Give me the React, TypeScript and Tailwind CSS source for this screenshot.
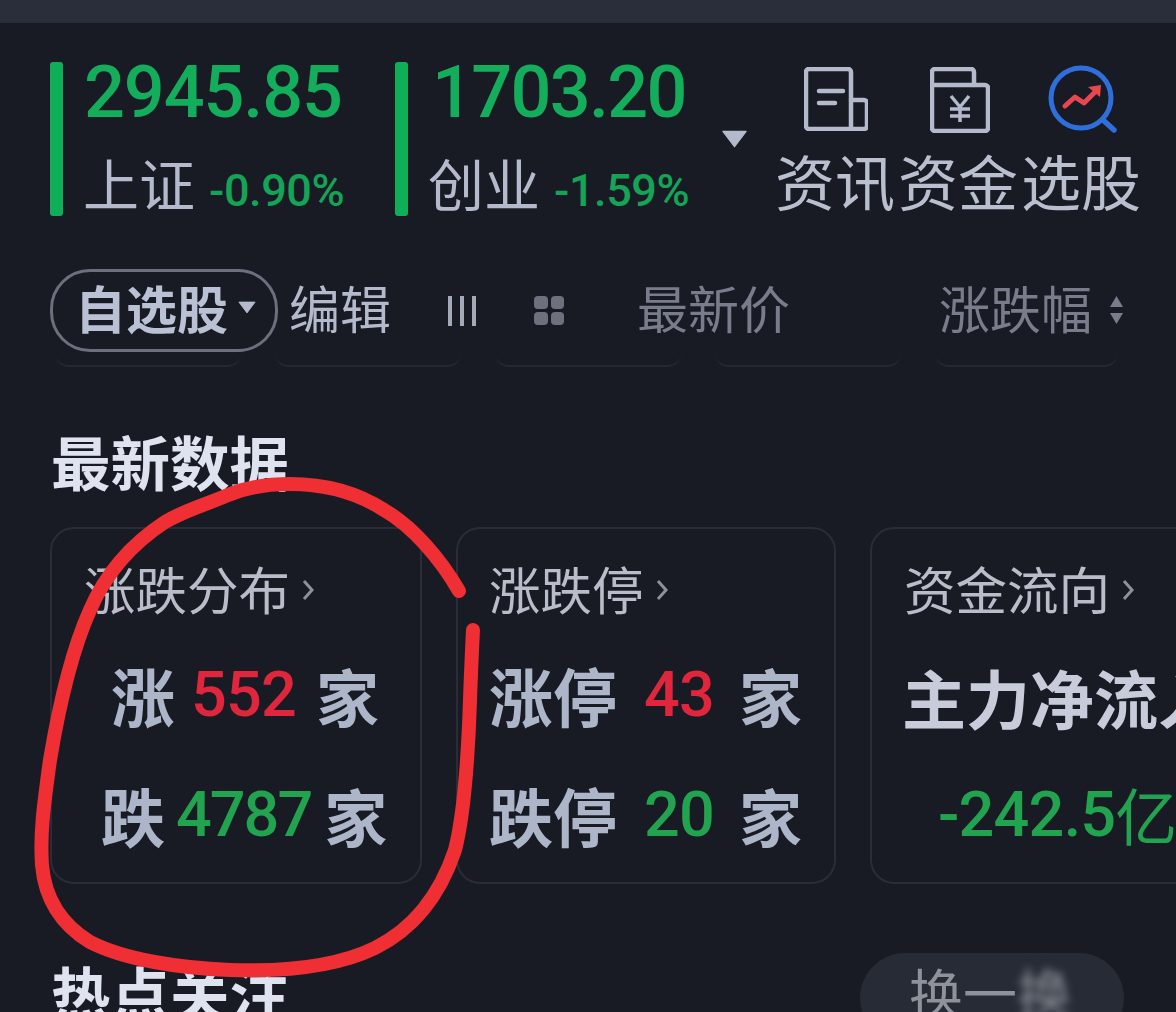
const cjk = { fontFamily: '"Noto Sans CJK SC", "Noto Sans", sans-serif' };

function Quote({ value, name, pct, width, numGap }: { value: string; name: string; pct: string; width: string; numGap: string }) {
  return (
    <div className={`flex ${width}`}>
      <div className="w-[13px] h-[154px] rounded-[3px] bg-[#0fae58]" />
      <div className="flex flex-col">
        <div className={`h-[62px] flex items-center text-[72px] leading-none font-medium text-[#14ad5c] font-['Roboto',sans-serif] ${numGap}`}>{value}</div>
        <div className="flex items-center h-[92px] pt-[24px] ml-[20px]">
          <span style={cjk} className="text-[56px] leading-none text-[#b4bacb]">{name}</span>
          <span className="ml-[14px] mt-[16px] text-[45px] leading-none font-medium text-[#14a357] font-['Roboto',sans-serif] tracking-[-0.4px]">{pct}</span>
        </div>
      </div>
    </div>
  );
}

function DocIcon() {
  return (
    <svg width="64" height="64" viewBox="0 0 64 64" fill="none" stroke="#b4bacb" strokeWidth="4.5" strokeLinejoin="round" strokeLinecap="round">
      <path d="M47 62H5a3 3 0 0 1-3-3V5a3 3 0 0 1 3-3h39a3 3 0 0 1 3 3v57" />
      <path d="M47 33h13a3 3 0 0 1 3 3v23a3 3 0 0 1-3 3H47" />
      <path d="M15 24h24M15 36h16" />
    </svg>
  );
}

function FundIcon() {
  return (
    <svg width="60" height="66" viewBox="0 0 60 66" fill="none" stroke="#b4bacb" strokeWidth="4.5" strokeLinejoin="round" strokeLinecap="round">
      <path d="M2 18V5a3 3 0 0 1 3-3h36a3 3 0 0 1 3 3v13" />
      <path d="M5 18h50a3 3 0 0 1 3 3v40a3 3 0 0 1-3 3H5a3 3 0 0 1-3-3V18" />
      <path d="M21 29l9 11 9-11M20 42h20M20 49h20M30 40v15" strokeWidth="3.5" strokeLinecap="butt" />
    </svg>
  );
}

function PickIcon() {
  return (
    <svg width="70" height="68" viewBox="0 0 70 68" fill="none" strokeLinecap="round" strokeLinejoin="round">
      <circle cx="33" cy="33" r="30" stroke="#2f6fdc" strokeWidth="5" />
      <path d="M55 55l11 10" stroke="#2f6fdc" strokeWidth="5.5" />
      <path d="M17 41l10-9 9 6 13-13" stroke="#e8474f" strokeWidth="5" />
      <path d="M40 22l13-2-1 12z" fill="#e8474f" />
    </svg>
  );
}

function Caret({ cls }: { cls: string }) {
  return (
    <svg className={cls} viewBox="0 0 20 14">
      <path d="M1 1h18L10 13z" fill="currentColor" stroke="currentColor" strokeWidth="1" strokeLinejoin="round" />
    </svg>
  );
}

function Chevron() {
  return (
    <svg className="ml-[12px] mt-[4px]" width="12" height="24" viewBox="0 0 12 24" fill="none" stroke="#8d919b" strokeWidth="3">
      <path d="M2 3l8 9-8 9" />
    </svg>
  );
}

function CardTitle({ text }: { text: string }) {
  return (
    <div className="flex items-center h-[50px]">
      <span className="text-[51.5px] leading-none text-[#b9bdc9] font-normal">{text}</span>
      <Chevron />
    </div>
  );
}

function StatRow({ a, n, numCls, tailCls, cls }: { a: string; n: string; numCls: string; tailCls: string; cls: string }) {
  return (
    <div className={`flex items-center h-[60px] ${cls}`}>
      <span className="text-[64px] leading-none font-bold text-[#adb6c8]">{a}</span>
      <span className={`font-['Roboto',sans-serif] font-medium text-[63px] leading-none ${numCls}`}>{n}</span>
      <span className={`text-[63px] leading-none font-bold text-[#adb6c8] ${tailCls}`}>家</span>
    </div>
  );
}

export default function App() {
  return (
    <div style={cjk} className="relative w-[1176px] h-[1012px] overflow-hidden bg-[#181b24]">
      <div className="h-[23px] bg-[#2a2d3a]" />

      <div className="flex mt-[39px] pl-[50px] h-[154px]">
        <Quote value="2945.85" name="上证" pct="-0.90%" width="w-[345px]" numGap="ml-[21px] tracking-[-1.1px]" />
        <Quote value="1703.20" name="创业" pct="-1.59%" width="w-[326px]" numGap="ml-[24px] tracking-[-1.7px]" />
        <Caret cls="w-[27px] h-[18px] mt-[68px] text-[#b4bacb]" />
        <div className="flex flex-col ml-[27px] w-[366px]">
          <div className="flex h-[70px] pt-[5px] pl-[29px] items-start">
            <DocIcon />
            <div className="ml-[62px]"><FundIcon /></div>
            <div className="ml-[58px] -mt-[2px]"><PickIcon /></div>
          </div>
          <div className="flex mt-[18px] gap-[3px] text-[60px] leading-none text-[#b9bfce] whitespace-nowrap">
            <span>资讯</span>
            <span>资金</span>
            <span>选股</span>
          </div>
        </div>
      </div>

      <div className="flex items-center mt-[53px] ml-[50px] h-[83px]">
        <div className="flex items-center w-[228px] h-[83px] rounded-[40px] border-[3px] border-[#6c707e] pl-[22px]">
          <span className="-mt-[6px] text-[51px] leading-none font-bold text-[#bac1d4]">自选股</span>
          <Caret cls="w-[18px] h-[13px] ml-[10px] -mt-[6px] text-[#b4bacb]" />
        </div>
        <span className="ml-[11px] -mt-[6px] text-[51px] leading-none text-[#b4bacb]">编辑</span>
        <div className="flex gap-[8px] ml-[57px] h-[30px]">
          <div className="w-[4px] h-full bg-[#a4a9b7]" />
          <div className="w-[4px] h-full bg-[#a4a9b7]" />
          <div className="w-[4px] h-full bg-[#a4a9b7]" />
        </div>
        <div className="grid grid-cols-2 gap-[3px] ml-[58px] w-[30px]">
          <div className="h-[13px] rounded-[4px] bg-[#6d717d]" />
          <div className="h-[13px] rounded-[4px] bg-[#6d717d]" />
          <div className="h-[13px] rounded-[4px] bg-[#6d717d]" />
          <div className="h-[13px] rounded-[4px] bg-[#6d717d]" />
        </div>
        <span className="ml-[73px] -mt-[6px] text-[51px] leading-none text-[#797d8b]">最新价</span>
        <span className="ml-[149px] -mt-[6px] text-[51px] leading-none text-[#797d8b]">涨跌幅</span>
        <svg className="ml-[17px] -mt-[2px]" width="15" height="30" viewBox="0 0 15 30">
          <path d="M7.5 1L14 12H1z" fill="#797d8b" />
          <path d="M1 18h13L7.5 29z" fill="#797d8b" />
        </svg>
      </div>

      <div className="flex gap-[34px] ml-[55px] h-[15px]">
        <div className="w-[186px] h-full rounded-b-[14px] border-b-2 border-[#242832]" />
        <div className="w-[186px] h-full rounded-b-[14px] border-b-2 border-[#242832]" />
        <div className="w-[186px] h-full rounded-b-[14px] border-b-2 border-[#242832]" />
        <div className="w-[186px] h-full rounded-b-[14px] border-b-2 border-[#242832]" />
        <div className="w-[183px] h-full rounded-b-[14px] border-b-2 border-[#242832]" />
      </div>

      <div className="mt-[64px] ml-[51px] h-[60px] text-[59.5px] leading-none font-bold text-[#dfe3f0]">最新数据</div>

      <div className="flex gap-[34px] mt-[36px] ml-[50px] w-[1300px]">
        <div className="w-[372px] h-[357px] shrink-0 rounded-[24px] border-2 border-[#2a2d38] pt-[34px] pl-[32px]">
          <CardTitle text="涨跌分布" />
          <StatRow a="涨" n="552" numCls="text-[#e0263c] tracking-[-0.8px]" tailCls="ml-[4px]" cls="mt-[51px] ml-[27px] gap-[16px]" />
          <StatRow a="跌" n="4787" numCls="text-[#22a34f] tracking-[-2px]" tailCls="ml-[2px]" cls="mt-[60px] ml-[17px] gap-[11px]" />
        </div>
        <div className="w-[380px] h-[357px] shrink-0 rounded-[24px] border-2 border-[#2a2d38] pt-[34px] pl-[31px]">
          <CardTitle text="涨跌停" />
          <StatRow a="涨停" n="43" numCls="text-[#e0263c] tracking-[-0.8px]" tailCls="-ml-[2px]" cls="mt-[51px] gap-[27px]" />
          <StatRow a="跌停" n="20" numCls="text-[#22a34f] tracking-[-0.8px]" tailCls="-ml-[2px]" cls="mt-[60px] gap-[27px]" />
        </div>
        <div className="w-[420px] h-[357px] shrink-0 rounded-[24px] border-2 border-[#2a2d38] pt-[34px] pl-[32px]">
          <CardTitle text="资金流向" />
          <div className="mt-[51px] -ml-[2px] h-[60px] text-[64px] leading-none font-bold text-[#c8cbda] whitespace-nowrap">主力净流入</div>
          <div className="mt-[60px] ml-[34px] h-[60px] flex items-center text-[#22a34f] whitespace-nowrap">
            <span className="font-['Roboto',sans-serif] font-medium text-[63px] leading-none tracking-[-0.8px]">-242.5</span>
            <span className="text-[62px] leading-none">亿</span>
          </div>
        </div>
      </div>

      <div className="flex items-start mt-[69px] ml-[51px]">
        <div className="mt-[9px] text-[59.5px] leading-none font-bold text-[#dfe3f0]">热点关注</div>
        <div className="flex items-start ml-[571px] w-[264px] h-[90px] rounded-[45px] bg-[#262b36] pl-[49px] pt-[12px] text-[54px] leading-none text-[#8f929a]">
          <span>换一</span>
          <span className="blur-[4px]">换</span>
        </div>
      </div>

      <svg className="absolute inset-0 pointer-events-none" width="1176" height="1012" viewBox="0 0 1176 1012" fill="none" stroke="#ef2f33" strokeWidth="14" strokeLinecap="round" strokeLinejoin="round">
        <path d="M459 591C440 558 412 526 384 510C350 488 315 484 290 484C265 484 245 488 228 495C205 505 185 510 165 522C130 545 105 575 90 610C72 650 60 700 50 760C43 810 40 835 42 865C45 900 62 925 90 942C125 960 180 968 230 970C290 972 340 965 375 948C415 928 440 895 455 850C464 815 468 760 470 700C471 670 472 650 473 630" />
      </svg>
    </div>
  );
}
